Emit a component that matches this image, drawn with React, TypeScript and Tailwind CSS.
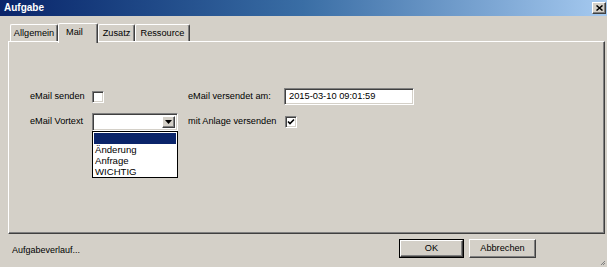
const raised =
  'border border-t-white border-l-white border-r-[#404040] border-b-[#404040] shadow-[inset_-1px_-1px_0_#808080]';
const sunken =
  'border border-t-[#808080] border-l-[#808080] border-r-white border-b-white shadow-[inset_1px_1px_0_#404040,inset_-1px_-1px_0_#d4d0c8]';

const tabs = [
  { label: 'Allgemein', w: 'w-[48px]' },
  { label: 'Mail', w: 'w-[40px]', active: true },
  { label: 'Zusatz', w: 'w-[37px]' },
  { label: 'Ressource', w: 'w-[55px]' },
];

const Checkbox = ({ checked }: { checked?: boolean }) => (
  <div className={`w-[12px] h-[12px] bg-white flex items-center justify-center ${sunken}`}>
    {checked && (
      <svg width="8" height="8" viewBox="0 0 8 8">
        <path d="M1 3.5 L3 5.5 L7 1.5" stroke="black" strokeWidth="1.6" fill="none" />
      </svg>
    )}
  </div>
);

export default function App() {
  return (
    <div className="w-[607px] h-[267px] bg-[#d4d0c8] flex flex-col font-['Liberation_Sans',Arial,sans-serif] text-[9.2px] text-black relative overflow-hidden">
      {/* title bar */}
      <div className="h-[16px] flex items-center justify-between pl-[4px] pr-[1px] bg-gradient-to-r from-[#0a246a] via-[#3a6ea5] to-[#a6caf0]">
        <span className="text-white font-bold text-[10px] leading-none">Aufgabe</span>
        <div className={`w-[14px] h-[12px] bg-[#d4d0c8] flex items-center justify-center ${raised}`}>
          <svg width="7" height="6" viewBox="0 0 7 6">
            <path d="M0.5 0.5 L6.5 5.5 M6.5 0.5 L0.5 5.5" stroke="black" strokeWidth="1.5" />
          </svg>
        </div>
      </div>

      <div className="flex flex-col pl-[8px] pt-[7px]">
        {/* tabs */}
        <div className="flex items-end h-[18px] pl-[2px] relative z-10">
          {tabs.map((t) =>
            t.active ? (
              <div
                key={t.label}
                className={`${t.w} h-[20px] -mb-[2px] bg-[#d4d0c8] rounded-t-[2px] border-t border-l border-r border-t-white border-l-white border-r-[#404040] shadow-[inset_-1px_0_0_#808080] pl-[7px] pt-[2px]`}
              >
                {t.label}
              </div>
            ) : (
              <div
                key={t.label}
                className={`${t.w} h-[17px] rounded-t-[2px] border-t border-l border-r border-t-white border-l-white border-r-[#404040] shadow-[inset_-1px_0_0_#808080] flex items-center justify-center pt-[1px]`}
              >
                {t.label}
              </div>
            ),
          )}
        </div>

        {/* panel */}
        <div className={`w-[597px] h-[193px] ${raised} pt-[46px] pl-[21px]`}>
          <div className="flex items-center h-[17px]">
            <span className="w-[62px]">eMail senden</span>
            <div className="w-[96px]">
              <Checkbox />
            </div>
            <span className="w-[96px]">eMail versendet am:</span>
            <div className={`w-[130px] h-[17px] bg-white flex items-center pl-[4px] text-[9.3px] ${sunken}`}>
              2015-03-10 09:01:59
            </div>
          </div>
          <div className="flex items-center h-[18px] mt-[8px]">
            <span className="w-[62px]">eMail Vortext</span>
            <div className="w-[96px]">
              <div className={`relative w-[86px] h-[18px] bg-white flex justify-end items-stretch p-[2px] ${sunken}`}>
                <div className={`w-[13px] bg-[#d4d0c8] flex items-center justify-center ${raised}`}>
                  <svg width="7" height="4" viewBox="0 0 7 4">
                    <path d="M0 0 H7 L3.5 4 Z" fill="black" />
                  </svg>
                </div>
                <div className="absolute top-[17px] -left-px w-[86px] h-[47px] bg-white border border-black flex flex-col text-[9.6px] leading-[11px] pt-px">
                  <div className="h-[11px] bg-[#0a246a] mx-px" />
                  <div className="h-[11px] pl-[2px]">Änderung</div>
                  <div className="h-[11px] pl-[2px]">Anfrage</div>
                  <div className="h-[11px] pl-[2px]">WICHTIG</div>
                </div>
              </div>
            </div>
            <span className="w-[97px]">mit Anlage versenden</span>
            <Checkbox checked />
          </div>
        </div>
      </div>

      {/* bottom row */}
      <div className="flex items-center h-[19px] mt-[5px] pl-[12px]">
        <span className="text-[9px] mt-[4px]">Aufgabeverlauf...</span>
        <div className="flex-1" />
        <div className="w-[65px] h-[19px] border border-black">
          <div className={`w-full h-full flex items-center justify-center ${raised}`}>OK</div>
        </div>
        <div className={`w-[67px] h-[19px] ml-[5px] mr-[71px] flex items-center justify-center ${raised}`}>
          Abbrechen
        </div>
      </div>

      <svg className="absolute right-[1px] bottom-[1px]" width="6" height="6" viewBox="0 0 6 6">
        <path d="M5 1 L1 5 M5 3 L3 5" stroke="#808080" strokeWidth="1" />
      </svg>
    </div>
  );
}
